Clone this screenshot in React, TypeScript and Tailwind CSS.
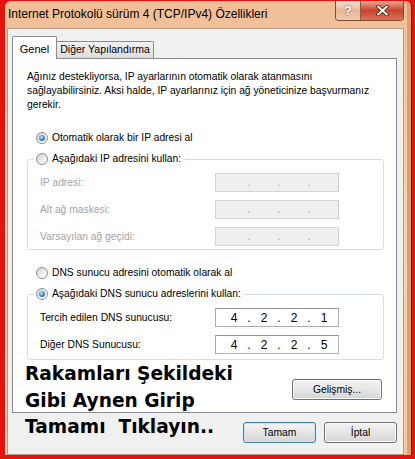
import React from 'react';

const ui: React.CSSProperties = { fontFamily: '"Liberation Sans", Arial, sans-serif' };
const heavy: React.CSSProperties = { fontFamily: '"DejaVu Sans", "Liberation Sans", sans-serif' };

function Radio({ checked }: { checked?: boolean }) {
  return (
    <span className="flex h-[12px] w-[12px] shrink-0 items-center justify-center rounded-full border border-[#8e8f8f] bg-linear-to-br from-[#cfcfcf] via-[#ececec] to-[#ffffff]">
      {checked && (
        <span className="h-[6px] w-[6px] rounded-full bg-[radial-gradient(circle_at_40%_35%,#b6ecff,#2a7cc4_60%,#0d3f7a)]" />
      )}
    </span>
  );
}

function RadioRow({ label, checked }: { label: string; checked?: boolean }) {
  return (
    <div className="flex h-[20px] items-center gap-[4px] text-[10.3px] text-black">
      <Radio checked={checked} />
      <span className="whitespace-nowrap">{label}</span>
    </div>
  );
}

function IpField({ values, disabled }: { values?: string[]; disabled?: boolean }) {
  const cells = values ?? ['', '', '', ''];
  return (
    <div
      className={
        disabled
          ? 'flex h-[19px] w-[124px] items-center border border-[#d2d2d2] bg-[#efefef] pl-[5px] text-[11px] text-[#9a9a9a]'
          : 'flex h-[19px] w-[124px] items-center border border-[#abadb3] border-t-[#8f939c] bg-white pl-[5px] text-[12px] text-black'
      }
    >
      {cells.map((v, i) => (
        <React.Fragment key={i}>
          <span className="w-[26px] text-center">{v}</span>
          {i < 3 && <span className="w-[4px] text-center">.</span>}
        </React.Fragment>
      ))}
    </div>
  );
}

function FieldRow({ label, disabled, values }: { label: string; disabled?: boolean; values?: string[] }) {
  return (
    <div className="flex h-[19px] items-center">
      <span className={(disabled ? 'text-[#a3a3a3]' : 'text-black') + ' flex-1 text-[10.3px]'}>{label}</span>
      <IpField disabled={disabled} values={values} />
    </div>
  );
}

function Button({ label, primary, w }: { label: string; primary?: boolean; w: string }) {
  return (
    <div
      className={
        (primary
          ? 'border-[#3c7fb1] shadow-[inset_0_0_0_1px_#c6e7f8] '
          : 'border-[#707070] shadow-[inset_0_0_0_1px_#fbfbfb] ') +
        w +
        ' flex h-[21px] items-center justify-center rounded-[3px] border bg-linear-to-b from-[#f3f3f3] via-[#e6e6e6] to-[#d4d4d4] text-[10.3px] text-black'
      }
    >
      {label}
    </div>
  );
}

export default function App() {
  return (
    <div className="relative h-[459px] w-[415px] overflow-hidden bg-[#e2140e] pl-[5px] pr-[3px] pt-[1px]" style={ui}>
      {/* window frame */}
      <div className="flex h-[454px] flex-col rounded-t-[6px] border-r border-[#5a2a14] bg-linear-to-b from-[#f1be96] via-[#f6d2b2] to-[#f2c6a2] pl-[2px] pr-[7px] shadow-[inset_-4px_0_0_#dca172]">
        {/* title bar */}
        <div className="flex h-[27px] shrink-0 items-start">
          <div className="flex h-[26px] flex-1 items-center pl-[1px] text-[12px] text-black">
            Internet Protokolü sürüm 4 (TCP/IPv4) Özellikleri
          </div>
          <div className="flex h-[20px] overflow-hidden rounded-b-[4px] border border-t-0 border-[#7a4c3a]">
            <div className="flex w-[25px] items-center justify-center border-r border-[#8a5a48] bg-linear-to-b from-[#f7e2d4] via-[#e9b898] to-[#f0c8a8] text-[13px] font-bold text-white [text-shadow:0_0_2px_#5a3020]">
              ?
            </div>
            <div className="flex w-[42px] items-center justify-center bg-linear-to-b from-[#e9a592] via-[#c8432c] to-[#dd7258]">
              <svg width="13" height="11" viewBox="0 0 13 11">
                <path d="M2 1.5 L11 9.5 M11 1.5 L2 9.5" stroke="#4a1a10" strokeWidth="3.6" strokeLinecap="round" />
                <path d="M2 1.5 L11 9.5 M11 1.5 L2 9.5" stroke="#ffffff" strokeWidth="2" strokeLinecap="round" />
              </svg>
            </div>
          </div>
        </div>

        {/* client area */}
        <div className="flex flex-1 flex-col border border-[#b89a86] bg-[#f0f0f0] pb-[5px] pl-[4px] pr-[6px]">
          {/* tabs */}
          <div className="mt-[7px] flex h-[22px] items-end">
            <div className="relative z-10 -mb-px flex h-[23px] w-[45px] items-start justify-center rounded-t-[2px] border border-b-0 border-[#898c95] bg-white pt-[4px] text-[11px]">
              Genel
            </div>
            <div className="flex h-[17px] w-[97px] items-center justify-center whitespace-nowrap rounded-tr-[2px] border border-b-0 border-l-0 border-[#898c95] bg-linear-to-b from-[#f2f2f2] to-[#dcdcdc] text-[10.5px]">
              Diğer Yapılandırma
            </div>
          </div>

          {/* panel */}
          <div className="flex w-[385px] flex-col border border-[#898c95] bg-white pb-[12px] pl-[14px] pr-[12px] pt-[11px]">
            <p className="text-[10.3px] leading-[14px] text-black">
              Ağınız destekliyorsa, IP ayarlarının otomatik olarak atanmasını sağlayabilirsiniz. Aksi halde, IP ayarlarınız için ağ yöneticinize başvurmanız gerekir.
            </p>

            <div className="mt-[16px] pl-[9px]">
              <RadioRow label="Otomatik olarak bir IP adresi al" checked />
            </div>

            <fieldset className="mt-px rounded-[3px] border border-[#d5dfe5] pb-[3px] pl-[12px] pr-[44px]">
              <legend className="-ml-[6px] px-[2px]">
                <RadioRow label="Aşağıdaki IP adresini kullan:" />
              </legend>
              <div className="mt-[4px] flex flex-col gap-[8px]">
                <FieldRow label="IP adresi:" disabled />
                <FieldRow label="Alt ağ maskesi:" disabled />
                <FieldRow label="Varsayılan ağ geçidi:" disabled />
              </div>
            </fieldset>

            <div className="mt-[13px] pl-[9px]">
              <RadioRow label="DNS sunucu adresini otomatik olarak al" />
            </div>

            <fieldset className="mt-px rounded-[3px] border border-[#d5dfe5] pb-[5px] pl-[12px] pr-[44px]">
              <legend className="-ml-[6px] px-[2px]">
                <RadioRow label="Aşağıdaki DNS sunucu adreslerini kullan:" checked />
              </legend>
              <div className="mt-[4px] flex flex-col gap-[8px]">
                <FieldRow label="Tercih edilen DNS sunucusu:" values={['4', '2', '2', '1']} />
                <FieldRow label="Diğer DNS Sunucusu:" values={['4', '2', '2', '5']} />
              </div>
            </fieldset>

            <div className="mt-[19px] flex justify-end pr-[2px]">
              <Button label="Gelişmiş..." w="w-[90px]" />
            </div>
          </div>

          {/* dialog buttons */}
          <div className="mt-[9px] flex justify-end gap-[8px]">
            <Button label="Tamam" primary w="w-[73px]" />
            <Button label="İptal" w="w-[73px]" />
          </div>
        </div>
      </div>

      {/* pasted annotation */}
      <div
        className="absolute left-[25px] top-[361px] whitespace-pre text-[18.6px] font-bold leading-[26.5px] text-black"
        style={heavy}
      >
        {'Rakamları Şekildeki\nGibi Aynen Girip\nTamamı  Tıklayın..'}
      </div>
    </div>
  );
}
